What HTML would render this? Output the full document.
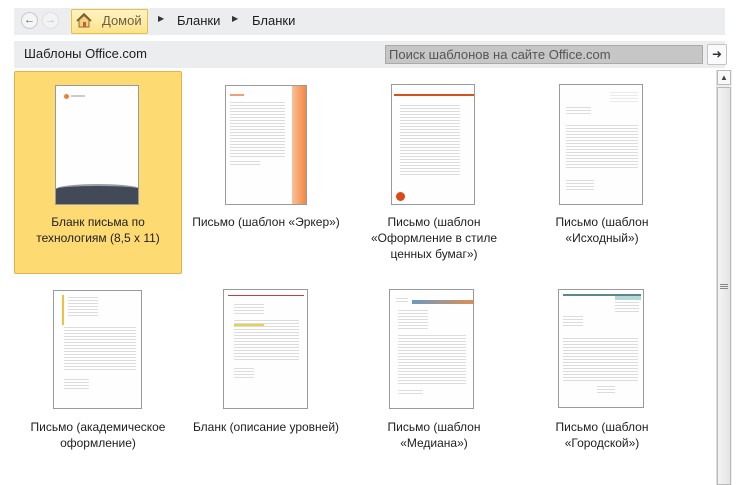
<!DOCTYPE html>
<html><head><meta charset="utf-8"><style>
body{margin:0;width:740px;height:485px;background:#fff;position:relative;overflow:hidden;font-family:"Liberation Sans","DejaVu Sans",sans-serif;font-size:12px;color:#1e1e1e}
.a{position:absolute}
.nav{left:14px;top:8px;width:711px;height:27px;background:#ecedee}
.hdr{left:14px;top:41px;width:711px;height:27px;background:#ecedee}
.thumb{position:absolute;background:#fdfefd;border:1px solid #9a9a9a;box-sizing:border-box;overflow:hidden}
.txt{position:absolute;background:repeating-linear-gradient(#dcdcdc 0 1px,transparent 1px 3px)}
.lbl{position:absolute;width:168px;text-align:center;line-height:16px;font-size:12px}
</style></head><body>
<div class="a nav"></div>
<div class="a" style="left:21px;top:12px;width:17px;height:17px;border-radius:50%;background:#f5f5f5;border:1px solid #c9c9c9;box-sizing:border-box;text-align:center;font-size:11px;line-height:15px;color:#555">&#8592;</div>
<div class="a" style="left:42px;top:12px;width:17px;height:17px;border-radius:50%;background:#f3f3f3;border:1px solid #e0e0e0;box-sizing:border-box;text-align:center;font-size:11px;line-height:15px;color:#bbb">&#8594;</div>
<div class="a" style="left:71px;top:9px;width:77px;height:25px;border:1px solid #e6c04a;border-radius:2px;box-sizing:border-box;background:linear-gradient(#fff3c2,#fde38a)"></div>
<svg class="a" style="left:76px;top:13px" width="16" height="15" viewBox="0 0 16 15"><path d="M1 8 L8 1 L15 8" fill="none" stroke="#7a5a20" stroke-width="1.6"/><path d="M3 7 V14 H13 V7 L8 2.5 Z" fill="#f3d08a" stroke="#8a6a30"/><rect x="7" y="9" width="3" height="5" fill="#c8641e"/></svg>
<div class="a" style="left:102px;top:13px;font-size:13px;color:#6b6040">Домой</div>
<div class="a" style="left:158px;top:14px;font-size:8px;color:#333">&#9654;</div>
<div class="a" style="left:177px;top:13px;font-size:13px">Бланки</div>
<div class="a" style="left:232px;top:14px;font-size:8px;color:#333">&#9654;</div>
<div class="a" style="left:252px;top:13px;font-size:13px">Бланки</div>
<div class="a hdr"></div>
<div class="a" style="left:24px;top:46px;font-size:13px">Шаблоны Office.com</div>
<div class="a" style="left:385px;top:45px;width:318px;height:19px;background:#c6c6c6;border:1px solid #a9a9a9;box-sizing:border-box;color:#555;font-size:13px;line-height:17px;padding-left:3px">Поиск шаблонов на сайте Office.com</div>
<div class="a" style="left:707px;top:44px;width:20px;height:21px;background:#fafafa;border:1px solid #c4c4c4;border-radius:2px;box-sizing:border-box;text-align:center;font-size:12px;line-height:18px;color:#333">&#10140;</div>
<div class="a" style="left:716px;top:70px;width:15px;height:415px;background:#eeeeee;border-left:1px solid #ddd"></div>
<div class="a" style="left:717px;top:70px;width:14px;height:15px;background:#f8f8f8;border:1px solid #b9b9b9;box-sizing:border-box;text-align:center;font-size:8px;line-height:13px;color:#444">&#9650;</div>
<div class="a" style="left:717px;top:87px;width:14px;height:398px;background:linear-gradient(90deg,#f4f4f4,#e4e4e4);border:1px solid #b9b9b9;box-sizing:border-box"></div>
<div class="a" style="left:720px;top:284px;width:8px;height:6px;background:repeating-linear-gradient(#888 0 1px,transparent 1px 2px)"></div>
<div class="a" style="left:14px;top:71px;width:168px;height:203px;background:#fedb72;border:1px solid #e1b34a;border-radius:2px;box-sizing:border-box"></div>
<div class="thumb" style="left:55px;top:85px;width:84px;height:120px">
 <div class="a" style="left:8px;top:8px;width:5px;height:5px;border-radius:50%;background:#f08030"></div>
 <div class="a" style="left:15px;top:9px;width:14px;height:2px;background:#ccc"></div>
 <div class="a" style="left:0;top:98px;width:84px;height:22px;background:#414a56;border-top:2px solid #9aa0a8;border-radius:60% 60% 0 0/6px 6px 0 0"></div>
</div>
<div class="thumb" style="left:225px;top:85px;width:82px;height:120px">
 <div class="a" style="left:66px;top:0;width:16px;height:120px;background:linear-gradient(90deg,#f9c098,#f08038)"></div>
 <div class="a" style="left:4px;top:8px;width:14px;height:2px;background:#f3a070"></div>
 <div class="txt" style="left:4px;top:16px;width:55px;height:55px"></div>
 <div class="txt" style="left:4px;top:75px;width:30px;height:5px"></div>
</div>
<div class="thumb" style="left:391px;top:84px;width:84px;height:121px">
 <div class="a" style="left:2px;top:9px;width:80px;height:2px;background:#d4521e"></div>
 <div class="txt" style="left:8px;top:20px;width:60px;height:70px"></div>
 <div class="a" style="left:4px;top:107px;width:9px;height:9px;border-radius:50%;background:#d9491a"></div>
</div>
<div class="thumb" style="left:559px;top:84px;width:84px;height:121px">
 <div class="txt" style="left:50px;top:7px;width:28px;height:12px;opacity:.6"></div>
 <div class="txt" style="left:6px;top:22px;width:25px;height:9px"></div>
 <div class="txt" style="left:6px;top:40px;width:72px;height:45px"></div>
 <div class="txt" style="left:6px;top:95px;width:28px;height:10px"></div>
</div>
<div class="lbl" style="left:14px;top:214px">Бланк письма по<br>технологиям (8,5 x 11)</div>
<div class="lbl" style="left:182px;top:214px">Письмо (шаблон «Эркер»)</div>
<div class="lbl" style="left:350px;top:214px">Письмо (шаблон<br>«Оформление в стиле<br>ценных бумаг»)</div>
<div class="lbl" style="left:518px;top:214px">Письмо (шаблон<br>«Исходный»)</div>
<div class="thumb" style="left:53px;top:290px;width:89px;height:119px">
 <div class="a" style="left:8px;top:4px;width:2px;height:30px;background:#f0c040"></div>
 <div class="txt" style="left:14px;top:6px;width:30px;height:20px"></div>
 <div class="txt" style="left:10px;top:36px;width:72px;height:45px"></div>
 <div class="txt" style="left:10px;top:88px;width:25px;height:12px"></div>
</div>
<div class="thumb" style="left:223px;top:289px;width:85px;height:120px">
 <div class="a" style="left:4px;top:5px;width:76px;height:1px;background:#c04040"></div>
 <div class="txt" style="left:10px;top:14px;width:30px;height:10px"></div>
 <div class="txt" style="left:10px;top:30px;width:65px;height:40px"></div>
 <div class="a" style="left:10px;top:34px;width:30px;height:2px;background:#e8d050"></div>
 <div class="txt" style="left:10px;top:78px;width:20px;height:12px"></div>
</div>
<div class="thumb" style="left:389px;top:289px;width:85px;height:120px">
 <div class="a" style="left:22px;top:10px;width:63px;height:4px;background:linear-gradient(90deg,#6a9ac0,#e09050)"></div>
 <div class="txt" style="left:6px;top:8px;width:12px;height:6px"></div>
 <div class="txt" style="left:8px;top:20px;width:30px;height:20px"></div>
 <div class="txt" style="left:8px;top:45px;width:68px;height:50px"></div>
 <div class="txt" style="left:8px;top:100px;width:25px;height:6px"></div>
</div>
<div class="thumb" style="left:558px;top:289px;width:86px;height:119px">
 <div class="a" style="left:4px;top:4px;width:78px;height:2px;background:#5a8a8a"></div>
 <div class="a" style="left:56px;top:6px;width:26px;height:4px;background:#b8d8d8"></div>
 <div class="txt" style="left:56px;top:12px;width:24px;height:10px"></div>
 <div class="txt" style="left:4px;top:26px;width:20px;height:12px"></div>
 <div class="txt" style="left:4px;top:48px;width:75px;height:45px"></div>
 <div class="txt" style="left:38px;top:96px;width:18px;height:8px"></div>
</div>
<div class="lbl" style="left:14px;top:419px">Письмо (академическое<br>оформление)</div>
<div class="lbl" style="left:182px;top:419px">Бланк (описание уровней)</div>
<div class="lbl" style="left:350px;top:419px">Письмо (шаблон<br>«Медиана»)</div>
<div class="lbl" style="left:518px;top:419px">Письмо (шаблон<br>«Городской»)</div>
</body></html>
